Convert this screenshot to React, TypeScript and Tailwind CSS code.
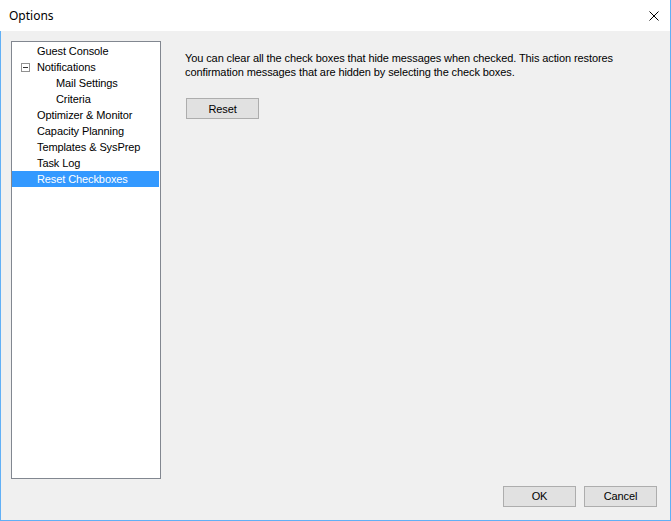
import React from "react";

const rows: { label: string; indent: number; expander?: boolean; selected?: boolean }[] = [
  { label: "Guest Console", indent: 0 },
  { label: "Notifications", indent: 0, expander: true },
  { label: "Mail Settings", indent: 1 },
  { label: "Criteria", indent: 1 },
  { label: "Optimizer & Monitor", indent: 0 },
  { label: "Capacity Planning", indent: 0 },
  { label: "Templates & SysPrep", indent: 0 },
  { label: "Task Log", indent: 0 },
  { label: "Reset Checkboxes", indent: 0, selected: true },
];

export default function App() {
  return (
    <div
      className="w-[671px] h-[521px] flex flex-col bg-white text-black tracking-[-0.1px]"
      style={{ fontFamily: '"Liberation Sans", Arial, sans-serif' }}
    >
      <div className="h-[31px] flex items-center justify-between bg-white border-r border-[#61b0f6]">
        <span
          className="pl-[9px] text-[12px] text-black tracking-normal"
          style={{ fontFamily: '"Noto Sans", "Open Sans", sans-serif' }}
        >
          Options
        </span>
        <div className="w-[32px] h-[31px] flex items-center justify-center">
          <svg width="10" height="10" viewBox="0 0 10 10">
            <path d="M0.5 0.5 L9.5 9.5 M9.5 0.5 L0.5 9.5" stroke="#000" strokeWidth="1" />
          </svg>
        </div>
      </div>
      <div className="flex-1 flex flex-col bg-[#f0f0f0] border-l border-r border-b border-[#61b0f6] pt-[10px] pl-[10px] pr-[13px] pb-[13px]">
        <div className="flex h-[438px]">
          <div className="w-[150px] h-[438px] bg-white border border-[#828790] pt-[1px] text-[11px]">
            {rows.map((r) => (
              <div
                key={r.label}
                className={`h-[16px] mr-[1px] flex items-center relative ${r.selected ? "bg-[#3399ff] text-white" : ""}`}
              >
                {r.expander && (
                  <div className="absolute left-[9px] top-[4px] w-[9px] h-[9px] border border-[#919191] bg-white flex items-center justify-center">
                    <div className="w-[5px] h-[1px] bg-[#333]" />
                  </div>
                )}
                <span className={r.indent ? "pl-[44px]" : "pl-[25px]"}>{r.label}</span>
              </div>
            ))}
          </div>
          <div className="flex-1 pl-[24px] pt-[10px] text-[11px] leading-[14px]">
            <p>
              You can clear all the check boxes that hide messages when checked. This action restores
              <br />
              confirmation messages that are hidden by selecting the check boxes.
            </p>
            <button className="mt-[19px] ml-[1px] w-[73px] h-[21px] bg-[#e1e1e1] border border-[#adadad] text-[11px] flex items-center justify-center">
              Reset
            </button>
          </div>
        </div>
        <div className="mt-[7px] flex justify-end gap-[8px]">
          <button className="w-[73px] h-[21px] bg-[#e1e1e1] border border-[#adadad] text-[11px] flex items-center justify-center">
            OK
          </button>
          <button className="w-[73px] h-[21px] bg-[#e1e1e1] border border-[#adadad] text-[11px] flex items-center justify-center">
            Cancel
          </button>
        </div>
      </div>
    </div>
  );
}
